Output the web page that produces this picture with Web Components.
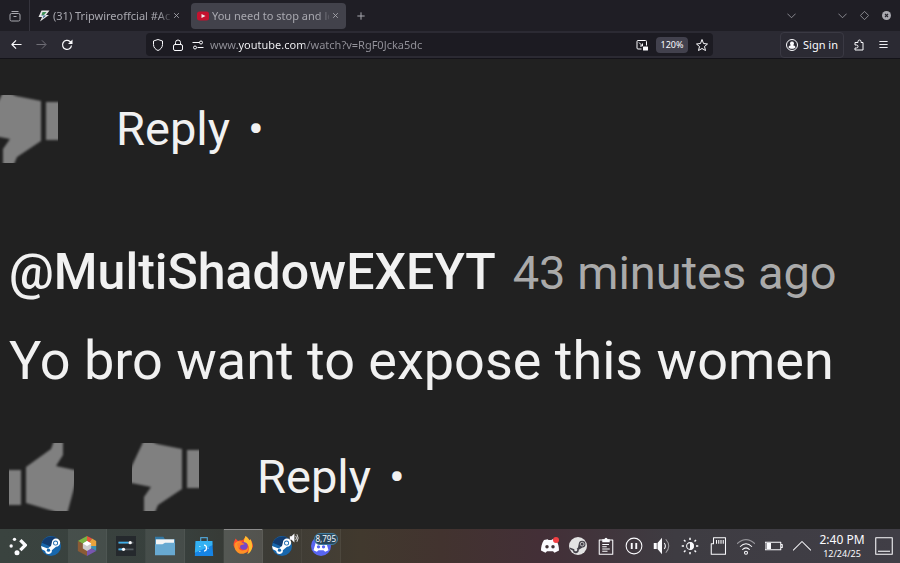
<!DOCTYPE html>
<html lang="en">
<head>
<meta charset="utf-8">
<title>You need to stop and learn</title>
<style>
html, body { margin: 0; height: 100%; }
body {
	display: flex;
	flex-direction: column;
	min-height: 100vh;
	background: #212121;
	color: #fbfbfe;
	font: 11px/16px "Noto Sans", sans-serif;
}
</style>
</head>
<body>
<tab-strip>
	<browser-tab icon="bolt">(31) Tripwireoffcial #Acc</browser-tab>
	<browser-tab icon="tube" active>You need to stop and lear</browser-tab>
</tab-strip>
<nav-bar url="www.youtube.com/watch?v=RgF0Jcka5dc" zoom="120%"></nav-bar>
<comment-list>
	<comment-actions cut></comment-actions>
	<user-comment author="@MultiShadowEXEYT" age="43 minutes ago">Yo bro want to expose this women</user-comment>
</comment-list>
<task-bar>
	<task-item slot="pinned" icon="plasma" label="Launcher"></task-item>
	<task-item slot="pinned" icon="steam" label="Steam"></task-item>
	<task-item icon="prism" label="Prism Launcher" open></task-item>
	<task-item icon="settings" label="System Settings"></task-item>
	<task-item icon="folder" label="Files" open></task-item>
	<task-item icon="store" label="Discover"></task-item>
	<task-item icon="firefox" label="Firefox" active></task-item>
	<task-item icon="steam" label="Steam" warm><ui-icon name="sound" size="10"></ui-icon></task-item>
	<task-item icon="discordapp" label="Discord" warm><b>8,795</b></task-item>
</task-bar>

<script>
const html = (strings, ...parts) => {
	const tpl = document.createElement('template')
	tpl.innerHTML = String.raw({ raw: strings }, ...parts)
	return tpl
}

class Base extends HTMLElement {
	constructor() {
		super()
		this.attachShadow({ mode: 'open' })
			.append(this.constructor.template.content.cloneNode(true))
	}

	$(sel) { return this.shadowRoot.querySelector(sel) }
}

// every glyph sits on a 24 unit grid, stroked in currentColor by default
const solid = 'fill="currentColor" stroke="none"'
const icons = {
	archive: `<rect x="2" y="7" width="20" height="15" rx="3"/><path d="M5 3h14M9 13h6"/>`,
	bolt: `<g stroke="none"><path fill="#e8e8e8" d="M7 1h16l-7 9h6L4 23l4-9H1z"/><path fill="#3f8f58" d="M9 4h8l-5 6H7z"/><path fill="#2b5f8c" d="M8 11h8l-7 6 2-5H6z"/></g>`,
	tube: `<rect x="0" y="3" width="24" height="18" rx="5" fill="#c4122f" stroke="none"/><path d="M9 8l8 4-8 4z" fill="#eee" stroke="none"/>`,
	close: `<path d="M4 4l16 16M20 4L4 20" stroke-width="3"/>`,
	plus: `<path d="M12 1v22M1 12h22" stroke-width="3"/>`,
	down: `<path d="M1 7l11 11L23 7"/>`,
	diamond: `<path d="M12 1l11 11-11 11L1 12z"/>`,
	closewin: `<circle cx="12" cy="12" r="12" ${solid}/><path stroke="#24232b" stroke-width="3" d="M8 8l8 8M16 8l-8 8"/>`,
	back: `<path d="M23 12H3M11 3l-9 9 9 9" stroke-width="2.500"/>`,
	forward: `<path d="M1 12h20M13 3l9 9-9 9"/>`,
	reload: `<path d="M21 13a9 9 0 1 1-3-8l3 3" stroke-width="2.500"/><path d="M23 1v9h-9z" ${solid}/>`,
	shield: `<path d="M12 1l9 3v7c0 6-4 10-9 12-5-2-9-6-9-12V4z"/>`,
	lock: `<rect x="3" y="11" width="18" height="12" rx="3"/><path d="M7 11V7a5 5 0 0 1 10 0v4"/>`,
	tune: `<path d="M1 7h14M11 17h12"/><circle cx="18" cy="7" r="3"/><circle cx="6" cy="17" r="3"/>`,
	pip: `<path d="M11 20H4a2 2 0 0 1-2-2V5a2 2 0 0 1 2-2h15a2 2 0 0 1 2 2v8M6 7l7 7M13 9v5H8"/><rect x="14" y="15" width="10" height="8" rx="1" ${solid}/>`,
	star: `<path d="M12 1l3 8 8 1-6 5 2 8-7-4-7 4 2-8-6-5 8-1z"/>`,
	avatar: `<circle cx="12" cy="12" r="11"/><path d="M12 5a4 4 0 0 1 2 7.500c3 .5 5 2 5 4.500-3 3.500-11 3.500-14 0 0-2.500 2-4 5-4.500A4 4 0 0 1 12 5z" ${solid}/>`,
	puzzle: `<path d="M4 22h16V7h-4V5a3 3 0 0 0-6 0v2H4v5h3a3 3 0 0 1 0 6H4z"/>`,
	menu: `<path d="M1 4h22M1 12h22M1 20h22" stroke-width="2.500"/>`,
	plasma: `<g ${solid}><circle cx="5" cy="12" r="2"/><circle cx="9" cy="4" r="2"/><circle cx="12" cy="20" r="3"/></g><path stroke-width="4" stroke-linejoin="miter" d="M16 5l6 6-6 6"/>`,
	steam: `<g stroke="none"><circle cx="12" cy="12" r="12" fill="#1767ad"/><path fill="#123c70" d="M1 8A12 12 0 0 1 22 6L12 13z"/><path fill="#fff" d="M0 12l8 3 4-3 1-4a5 5 0 1 1 5 5l-5 4a4 4 0 0 1-8 1l-4-2z"/><circle cx="17.500" cy="8.500" r="3" fill="#1767ad"/><circle cx="17.500" cy="8.500" r="2" fill="#fff"/><circle cx="9" cy="17" r="2" fill="#1767ad"/></g>`,
	prism: `<g stroke="none"><path fill="#7cb342" d="M12 12L1 6l11-6z"/><path fill="#e5533d" d="M12 12V0l6 3z"/><path fill="#e8a33c" d="M12 12l6-9 5 3v6z"/><path fill="#3c8fb4" d="M12 12h11v6z"/><path fill="#7956b0" d="M12 12l11 6-11 6z"/><path fill="#8b5b35" d="M12 12v12L1 18V6z"/><path fill="#ccc" d="M12 6l5 3v6l-5 3-5-3V9z"/><path fill="#fff" d="M12 6l5 3-5 3-5-3z"/></g>`,
	settings: `<rect width="24" height="24" fill="#25292d" stroke="none"/><path stroke="#555c62" d="M3 8h18M3 16h18"/><path stroke="#3daee9" d="M3 8h12M3 16h5"/><circle cx="17" cy="8" r="2" ${solid}/><circle cx="9" cy="16" r="2" ${solid}/>`,
	folder: `<g stroke="none"><path fill="#3479a5" d="M0 1h10l2 3h12v18H0z"/><path fill="#f4f4f4" d="M1 4h22v8H1z"/><path fill="#68a9d1" d="M0 10h9l3-2h12v15H0z"/></g>`,
	store: `<path d="M8 6V2h8v4" stroke="#4f9fce" stroke-width="1.500"/><path fill="#1684e5" stroke="none" d="M2 6h20l1 18H1z"/><path fill="#33b1f2" stroke="none" d="M2 6h20v5L1 20z"/><path stroke="#fff" stroke-width="1.500" d="M7 12v1M7 18v1M12 11c4 0 4 7 0 7M17 14v1"/>`,
	firefox: `<g stroke="none"><path fill="#ff4a2d" d="M1 13C0 8 2 6 3 3l3 3c2-1 3-1 5-1 3-1 4-4 4-5 3 2 4 4 5 5l1-1c2 3 3 6 3 9a12 11 0 0 1-23-1z"/><path fill="#ffbd2e" d="M15 0c3 2 4 4 5 5l1-1c4 8 2 15-4 18 3-5 3-13-3-14-2-2 0-5 1-8z"/><path fill="#ff9126" d="M2 9c3-3 5-3 9-2l-2 3c-5 3-1 9 4 7 4 0 4-2 5-4 2 6-6 11-12 7-3-2-5-6-4-11z"/><circle cx="13" cy="12" r="4.500" fill="#7548c8"/><path fill="#ff7b2c" d="M5 9c3-2 7-1 9 1l-5 1c-1 1 0 2-1 3-2 0-3-2-3-5z"/></g>`,
	sound: `<path d="M2 8h4l7-7v22l-7-7H2z" ${solid}/><path d="M16 7q4 5 0 10M19 3q6 9 0 18"/>`,
	discordapp: `<circle cx="12" cy="12" r="12" fill="#5865f2" stroke="none"/><path fill="#fff" stroke="none" d="M6 7h12l3 10-4 2-2-2H9l-2 2-4-2z"/><g fill="#5865f2" stroke="none"><circle cx="9" cy="13" r="2"/><circle cx="15" cy="13" r="2"/></g>`,
	discord: `<path ${solid} d="M4 4l5-1 1 1h4l1-1 5 1c3 4 4 9 4 14l-6 3-2-2H8l-2 2-6-3C0 14 1 8 4 4z"/><g fill="#403338" stroke="none"><circle cx="8" cy="13" r="2.300"/><circle cx="16" cy="13" r="2.300"/></g><circle cx="20" cy="4" r="4" fill="#f23f43" stroke="none"/>`,
	steamtray: `<circle cx="12" cy="12" r="12" fill="#e3e3e3" stroke="none"/><path fill="#45424a" stroke="none" d="M1 14l8 3 3-3 1-5a4.500 4.500 0 1 1 5 5l-5 3a4 4 0 0 1-8 1l-4-2z"/><circle cx="17.500" cy="9.500" r="2.500" fill="#45424a" stroke="#e3e3e3" stroke-width="1"/><circle cx="9" cy="17" r="2" fill="#e3e3e3" stroke="none"/>`,
	clipboard: `<rect x="3" y="4" width="18" height="19"/><path ${solid} d="M7 7V3h3a2 2 0 0 1 4 0h3v4z"/><path d="M7 10h9M7 13h6M7 16h10M7 19h7"/>`,
	pause: `<circle cx="12" cy="12" r="10.500"/><path d="M9 8v8M15 8v8" stroke-width="2.500"/>`,
	volume: `<path d="M1 8h4v8H1zM6 8l6-7v22l-6-7z" ${solid}/><path d="M15 8q3 4 0 8"/><path opacity=".5" d="M17 3q8 9 0 18"/>`,
	sun: `<circle cx="12" cy="12" r="4.500"/><path ${solid} d="M12 7v10a5 5 0 0 0 0-10z"/><path stroke-width="2" d="M12 1v3M12 20v3M1 12h3M20 12h3M4 4l2 2M18 18l2 2M4 20l2-2M18 6l2-2"/>`,
	card: `<path d="M6 1h16v22H3V9h3z"/><path d="M10 4v5M13 4v5M16 4v5M19 4v5"/>`,
	wifi: `<path opacity=".45" d="M0 9q12-11 24 0"/><path d="M4 13q8-8 16 0M7 17q5-5 10 0"/><circle cx="12" cy="21" r="2"/>`,
	battery: `<path d="M0 7h21v10H0zM21 10h2v4h-2"/><path ${solid} d="M2 8h6v8H2z"/>`,
	up: `<path d="M0 18L12 6l12 12"/>`,
	desk: `<rect x="1" y="1" width="22" height="22"/><path d="M4 19h16"/>`,
}

class UiIcon extends Base {
	static observedAttributes = ['name', 'size']
	static template = html`
<style>
:host { display: inline-flex; flex: none; }
svg {
	display: block;
	fill: none;
	stroke: currentColor;
	stroke-width: var(--stroke, 2);
	stroke-linejoin: round;
}
</style>
<svg width="12" height="12" viewBox="0 0 24 24" aria-hidden="true"></svg>`

	attributeChangedCallback(attr, old, value) {
		const svg = this.$('svg')
		if (attr === 'name') {
			svg.innerHTML = icons[value]
		} else {
			svg.setAttribute('width', value)
			svg.setAttribute('height', value)
		}
	}
}

const buttonReset = `
button {
	display: flex;
	align-items: center;
	justify-content: center;
	margin: 0;
	padding: 0;
	border: 0;
	background: none;
	color: inherit;
	font: inherit;
}`

class BrowserTab extends Base {
	static template = html`
<style>
${buttonReset}
:host {
	display: flex;
	align-items: center;
	box-sizing: border-box;
	flex: 0 1 155px;
	min-width: 0;
	height: 26px;
	padding: 0 7px 0 6px;
	gap: 3px;
	border-radius: 4px;
	color: #a9a9b0;
}
:host([active]) { background: #42424b; }
#title {
	flex: 1;
	min-width: 0;
	justify-content: flex-start;
	overflow: hidden;
	white-space: nowrap;
	mask-image: linear-gradient(90deg, #000 90%, #0003);
}
</style>
<ui-icon id="fav"></ui-icon>
<button id="title"><slot></slot></button>
<button aria-label="Close tab"><ui-icon name="close" size="7"></ui-icon></button>`

	constructor() {
		super()
		this.$('#fav').setAttribute('name', this.getAttribute('icon'))
	}
}

class TabStrip extends Base {
	static template = html`
<style>
${buttonReset}
:host {
	display: flex;
	align-items: center;
	height: 31px;
	background: #1f1e25;
	color: #a9a9b0;
}
#all { width: 30px; height: 31px; border-right: 1px solid #35343d; }
#tabs { display: flex; flex: 1; min-width: 0; gap: 4px; padding-left: 2px; }
#add { width: 22px; }
#win { display: flex; }
#win button { width: 22px; height: 24px; }
#win #list { width: 28px; margin-right: 26px; }
#win :last-child { margin-right: 2px; }
</style>
<button id="all" aria-label="Tab overview"><ui-icon name="archive"></ui-icon></button>
<div id="tabs">
	<slot></slot>
	<button id="add" aria-label="New tab"><ui-icon name="plus" size="8"></ui-icon></button>
</div>
<div id="win">
	<button id="list" aria-label="List all tabs"><ui-icon name="down" size="9"></ui-icon></button>
	<button aria-label="Minimize"><ui-icon name="down" size="9"></ui-icon></button>
	<button aria-label="Maximize"><ui-icon name="diamond" size="9"></ui-icon></button>
	<button aria-label="Close window"><ui-icon name="closewin" size="9"></ui-icon></button>
</div>`
}

class NavBar extends Base {
	static template = html`
<style>
${buttonReset}
:host {
	display: flex;
	align-items: center;
	justify-content: space-between;
	box-sizing: border-box;
	height: 28px;
	border-bottom: 1px solid #141319;
	background: #2b2a33;
}
div { display: flex; align-items: center; }
#nav { padding-left: 4px; }
#nav button, #right > button { width: 25px; height: 24px; }
#nav [disabled] { color: #77767e; }
#box {
	flex: 0 1 63%;
	min-width: 0;
	height: 23px;
	border-radius: 4px;
	background: #1c1b22;
}
#site { padding: 0 6px; gap: 8px; }
#url {
	flex: 1;
	min-width: 0;
	padding: 0;
	border: 0;
	outline: 0;
	font: inherit;
	color: transparent;
	caret-color: #fbfbfe;
	/* host name bright, the rest dimmed */
	background: linear-gradient(90deg, #94939b 27px, #fbfbfe 27px 95px, #94939b 95px);
	background-clip: text;
}
#marks { padding: 0 5px; gap: 8px; }
#zoom {
	height: 16px;
	width: 32px;
	border-radius: 4px;
	background: #42414d;
	font-size: 9px;
}
#right { padding-right: 4px; }
#right #sign {
	box-sizing: border-box;
	width: auto;
	height: 26px;
	padding: 0 5px;
	gap: 5px;
	margin-right: 2px;
	border: 1px solid #3a3943;
	border-radius: 4px;
}
</style>
<div id="nav">
	<button aria-label="Back"><ui-icon name="back" size="11"></ui-icon></button>
	<button aria-label="Forward" disabled><ui-icon name="forward" size="11"></ui-icon></button>
	<button aria-label="Reload"><ui-icon name="reload"></ui-icon></button>
</div>
<div id="box">
	<div id="site">
		<button aria-label="Tracking protection"><ui-icon name="shield"></ui-icon></button>
		<button aria-label="Connection"><ui-icon name="lock"></ui-icon></button>
		<button aria-label="Permissions"><ui-icon name="tune"></ui-icon></button>
	</div>
	<input id="url" type="text" aria-label="Address" spellcheck="false">
	<div id="marks">
		<button aria-label="Picture in picture"><ui-icon name="pip"></ui-icon></button>
		<button id="zoom"></button>
		<button aria-label="Bookmark"><ui-icon name="star"></ui-icon></button>
	</div>
</div>
<div id="right">
	<button id="sign"><ui-icon name="avatar"></ui-icon>Sign in</button>
	<button aria-label="Extensions"><ui-icon name="puzzle"></ui-icon></button>
	<button aria-label="Menu"><ui-icon name="menu" size="9"></ui-icon></button>
</div>`

	connectedCallback() {
		this.$('#url').value = this.getAttribute('url')
		this.$('#zoom').textContent = this.getAttribute('zoom')
	}
}

class CommentActions extends Base {
	static template = html`
<style>
${buttonReset}
:host {
	display: flex;
	align-items: center;
	gap: 58px;
	font-size: 47px;
	line-height: 68px;
}
:host([cut]) { margin-left: -18px; }
:host([cut]) #up { display: none; }
svg { display: block; fill: #808080; }
#reply { display: flex; gap: 18px; }
</style>
<button id="up" aria-label="Like">
	<svg width="65" height="68" viewBox="0 0 65 68">
		<filter id="soft-up"><feGaussianBlur stdDeviation="1"/></filter>
		<g filter="url(#soft-up)"><path d="M-5 27h17v35H-5zM17 60V24L42 6l4-11h8v17l-7 11 23 5-2 6-11 41-13-7z"/></g>
	</svg>
</button>
<button id="down" aria-label="Dislike">
	<svg width="67" height="68" viewBox="0 0 67 68">
		<filter id="soft-down"><feGaussianBlur stdDeviation="1"/></filter>
		<g filter="url(#soft-down)"><path d="M55 7h17v38H55zM50 6v40L26 62l-5 12h-9V54l7-10-25-5 2-8L13-5l12 6z"/></g>
	</svg>
</button>
<div id="reply"><button>Reply</button><span>•</span></div>`
}

class UserComment extends Base {
	static template = html`
<style>
:host { display: block; }
header {
	display: flex;
	align-items: baseline;
	gap: 17px;
	font-size: 50px;
	line-height: 60px;
	white-space: nowrap;
}
#author { color: inherit; font-weight: 500; text-decoration: none; }
time { color: #aaa; font-size: 47px; }
p {
	margin: 26px 0 50px;
	font-size: 54px;
	line-height: 64px;
}
</style>
<header><a id="author" href="#"></a><time></time></header>
<p><slot></slot></p>
<comment-actions></comment-actions>`

	connectedCallback() {
		this.$('#author').textContent = this.getAttribute('author')
		this.$('time').textContent = this.getAttribute('age')
	}
}

class CommentList extends Base {
	static template = html`
<style>
:host {
	display: flex;
	flex: 1;
	flex-direction: column;
	gap: 79px;
	padding: 36px 9px 0;
	overflow: hidden;
	background: #212121;
	color: #f1f1f1;
	font-family: Roboto, sans-serif;
}
</style>
<slot></slot>`
}

class TaskItem extends Base {
	static template = html`
<style>
${buttonReset}
:host {
	display: block;
	position: relative;
	box-sizing: border-box;
	width: 39px;
	height: 34px;
	border-right: 1px solid #ffffff0c;
}
:host([slot]) { width: 34px; border: 0; }
:host([open]) { background: #ffffff12; }
:host([warm]) { background: #ffffff08; }
:host([active]) { background: #ffffff26; box-shadow: inset 0 1px #8b8b8b; }
button { width: 100%; height: 100%; }
::slotted(*) { position: absolute; }
::slotted(ui-icon) { top: 4px; right: 2px; }
::slotted(b) {
	top: 4px;
	right: 2px;
	padding: 0 1px;
	border: 1px solid #3f7ca0;
	border-radius: 6px;
	background: #29465a;
	font-size: 8px;
	font-weight: 400;
	line-height: 10px;
}
</style>
<button><ui-icon size="20"></ui-icon></button>
<slot></slot>`

	constructor() {
		super()
		this.$('ui-icon').setAttribute('name', this.getAttribute('icon'))
		this.$('button').setAttribute('aria-label', this.getAttribute('label'))
	}
}

const tray = ['discord', 'steamtray', 'clipboard', 'pause', 'volume', 'sun', 'card', 'wifi', 'battery', 'up']

class TaskBar extends Base {
	static template = html`
<style>
${buttonReset}
:host {
	display: flex;
	justify-content: space-between;
	height: 34px;
	background: linear-gradient(90deg, #3a433f, #38403d 20%, #36352f 30%, #41392e 40%, #42332f 49%, #432f37 60%, #3e3c42 75%, #403e46);
}
div { display: flex; gap: 0; }
.tray { width: 28px; }
.tray, #desk { --stroke: 1.4; }
#clock { flex-direction: column; width: 52px; font-size: 12px; line-height: 16px; }
#date { font-size: 9px; line-height: 12px; }
#desk { width: 32px; }
</style>
<div><slot name="pinned"></slot><slot></slot></div>
<div>
	${tray.map(name => `<button class="tray" aria-label="${name}"><ui-icon name="${name}" size="18"></ui-icon></button>`).join('')}
	<button id="clock"><time>2:40 PM</time><time id="date">12/24/25</time></button>
	<button id="desk" aria-label="Show desktop"><ui-icon name="desk" size="18"></ui-icon></button>
</div>`
}

customElements.define('ui-icon', UiIcon)
customElements.define('browser-tab', BrowserTab)
customElements.define('tab-strip', TabStrip)
customElements.define('nav-bar', NavBar)
customElements.define('comment-actions', CommentActions)
customElements.define('user-comment', UserComment)
customElements.define('comment-list', CommentList)
customElements.define('task-item', TaskItem)
customElements.define('task-bar', TaskBar)
</script>
</body>
</html>
